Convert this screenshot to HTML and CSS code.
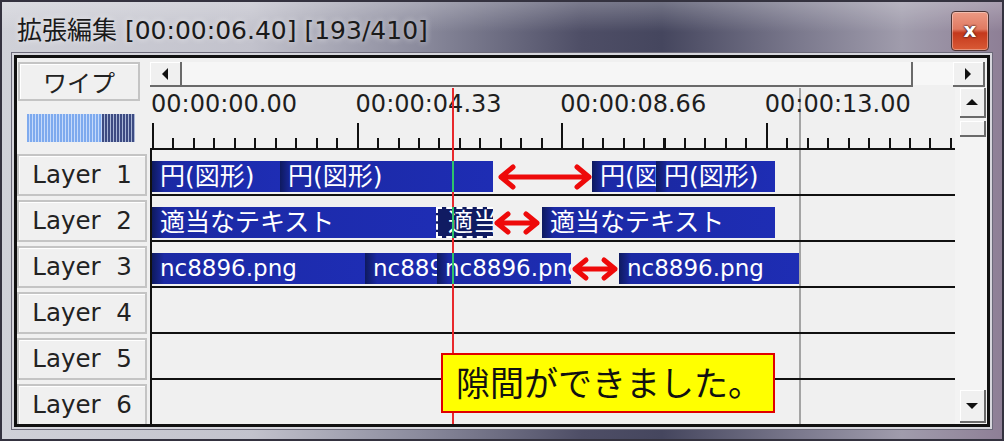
FILE: index.html
```html
<!DOCTYPE html>
<html lang="ja">
<head>
    <meta charset="UTF-8">
    <title>拡張編集</title>
    <link rel="stylesheet" href="styles.css">
</head>
<body>
    <div class="window">
        <div class="titlebar">
            <span class="title">拡張編集 [00:00:06.40] [193/410]</span>
            <span class="close">x</span>
        </div>

        <div class="client">
            <!-- layer names -->
            <div class="side">
                <div class="side-head">
                    <div class="label-btn wipe">ワイプ</div>
                    <div class="meter"></div>
                </div>
                <div class="label-btn layer">Layer&nbsp;&nbsp;1</div>
                <div class="label-btn layer">Layer&nbsp;&nbsp;2</div>
                <div class="label-btn layer">Layer&nbsp;&nbsp;3</div>
                <div class="label-btn layer">Layer&nbsp;&nbsp;4</div>
                <div class="label-btn layer">Layer&nbsp;&nbsp;5</div>
                <div class="label-btn layer">Layer&nbsp;&nbsp;6</div>
            </div>

            <!-- horizontal scrollbar -->
            <div class="hscroll">
                <div class="sbtn wide">
                    <svg width="8" height="12" viewBox="0 0 8 12"><polygon points="7,0 7,12 1,6" fill="#111"/></svg>
                </div>
                <div class="hthumb"></div>
                <div class="hspace"></div>
                <div class="sbtn wide">
                    <svg width="8" height="12" viewBox="0 0 8 12"><polygon points="1,0 1,12 7,6" fill="#111"/></svg>
                </div>
            </div>

            <!-- timeline -->
            <div class="timeline">
                <div class="end-mark"></div>

                <div class="ruler">
                    <div class="ruler-labels">
                        <span>00:00:00.00</span>
                        <span>00:00:04.33</span>
                        <span>00:00:08.66</span>
                        <span>00:00:13.00</span>
                    </div>
                    <div class="ticks"></div>
                </div>

                <div class="track">
                    <div class="clip jp" style="left: 0; width: 128px;">円(図形)</div>
                    <div class="clip jp" style="left: 128px; width: 213px;">円(図形)</div>
                    <div class="clip jp" style="left: 440px; width: 64px;">円(図形)</div>
                    <div class="clip jp" style="left: 504px; width: 119px;">円(図形)</div>
                    <svg class="gap-arrow" style="left: 345px; width: 96px;" viewBox="0 0 96 31">
                        <path d="M4 16 H92 M16 6 L4 16 L16 26 M80 6 L92 16 L80 26" />
                    </svg>
                </div>
                <div class="track">
                    <div class="clip jp" style="left: 0; width: 284px;">適当なテキスト</div>
                    <div class="clip jp selected" style="left: 284px; width: 57px;">適当なテキスト</div>
                    <div class="clip jp" style="left: 390px; width: 233px;">適当なテキスト</div>
                    <svg class="gap-arrow" style="left: 341px; width: 48px;" viewBox="0 0 48 31">
                        <path d="M4 16 H44 M15 7 L4 16 L15 25 M33 7 L44 16 L33 25" />
                    </svg>
                </div>
                <div class="track">
                    <div class="clip" style="left: 0; width: 213px;">nc8896.png</div>
                    <div class="clip" style="left: 213px; width: 72px;">nc8896.png</div>
                    <div class="clip" style="left: 285px; width: 134px;">nc8896.png</div>
                    <div class="clip" style="left: 467px; width: 180px;">nc8896.png</div>
                    <svg class="gap-arrow" style="left: 419px; width: 48px;" viewBox="0 0 48 31">
                        <path d="M4 16 H44 M15 7 L4 16 L15 25 M33 7 L44 16 L33 25" />
                    </svg>
                </div>
                <div class="track"></div>
                <div class="track"></div>
                <div class="track"></div>

                <div class="playhead"></div>
                <div class="note">隙間ができました。</div>
            </div>

            <!-- vertical scrollbar -->
            <div class="vscroll">
                <div class="sbtn up">
                    <svg width="12" height="8" viewBox="0 0 12 8"><polygon points="0,7 12,7 6,1" fill="#111"/></svg>
                </div>
                <div class="vthumb"></div>
                <div class="sbtn down">
                    <svg width="12" height="8" viewBox="0 0 12 8"><polygon points="0,1 12,1 6,7" fill="#111"/></svg>
                </div>
            </div>
        </div>
    </div>
</body>
</html>
```

FILE: styles.css
```css
html, body { margin: 0; padding: 0; }
body { width: 1004px; height: 441px; overflow: hidden; background: #222; }

.window {
    box-sizing: border-box; width: 1004px; height: 441px;
    border: 2px solid #34323f;
    padding: 0 12px 12px 12px;
    display: flex; flex-direction: column;
    background:
        linear-gradient(to bottom, rgba(255,255,255,0.25), rgba(255,255,255,0) 30px),
        linear-gradient(to right, #d0d1d8 0, #c2c2cc 25%, #8a8a9c 42%, #4e4e66 58%, #45465e 66%, #7c7a8e 80%, #a09cac 90%, #8e7f96 100%);
}

/* title bar */
.titlebar { height: 53px; display: flex; align-items: center; margin: 0 -12px; padding-left: 15px; }
.title { font: 25px "DejaVu Sans", "Noto Sans CJK JP", sans-serif; color: #1a1a1a; text-shadow: 0 0 6px rgba(255,255,255,0.7); margin-top: -2px; }
.close {
    margin-left: auto; margin-right: 13px; align-self: flex-start; margin-top: 9px;
    width: 36px; height: 38px; border: 1px solid #4c3434; border-radius: 4px;
    background: linear-gradient(to bottom, #ec9a84 0, #e07a62 45%, #c4381c 55%, #d95a36 100%);
    box-shadow: inset 0 0 0 1px rgba(255,255,255,0.35);
    color: #fff; font: bold 20px "DejaVu Sans", sans-serif; line-height: 36px; text-align: center;
    text-shadow: 0 0 2px #3a1a1a, 0 0 2px #3a1a1a;
}

/* client area */
.client {
    flex: 1; display: grid;
    grid-template-columns: 133px 805px 32px;
    grid-template-rows: 30px 60px 1fr;
    border: 3px solid #111; background: #f0f0f0; overflow: hidden;
    box-shadow: 0 0 0 2px #d6d6dc, 0 0 0 3px #6c6a7a;
}

.side { grid-column: 1; grid-row: 1 / 4; overflow: hidden; }
.side-head { height: 92px; }
.label-btn {
    box-sizing: border-box; background: #f0f0f0; color: #222;
    border: 2px solid #c4c4c4; box-shadow: inset 1px 1px 0 #fff;
    text-align: center;
}
.wipe { width: 122px; height: 39px; margin: 4px 0 0 1px; font: 24px/35px "Noto Sans CJK JP", sans-serif; }
.meter {
    width: 108px; height: 28px; margin: 13px 0 0 10px;
    background:
        repeating-linear-gradient(to right, #3d4b82 0 2px, #a9b6d6 2px 3px) right / 33px 100% no-repeat,
        repeating-linear-gradient(to right, #7eaaee 0 2px, #c6dafa 2px 3px);
}
.layer { width: 130px; height: 42px; margin-bottom: 4px; font: 24.5px/38px "DejaVu Sans", sans-serif; }

/* scrollbars */
.hscroll { grid-column: 2 / 4; grid-row: 1; display: flex; padding-top: 4px; }
.sbtn {
    box-sizing: border-box; background: #f0f0f0;
    border-right: 2px solid #6a6a6a; border-bottom: 2px solid #6a6a6a;
    box-shadow: inset 1px 1px 0 #fff;
    display: flex; align-items: center; justify-content: center;
}
.sbtn.wide { width: 32px; height: 25px; }
.hthumb { width: 731px; height: 25px; box-sizing: border-box; background: #f6f6f6; border-right: 2px solid #6a6a6a; border-bottom: 2px solid #6a6a6a; }
.hspace { width: 40px; height: 23px; background: #f7f7f7; }

.vscroll { grid-column: 3; grid-row: 2 / 4; display: flex; flex-direction: column; padding-left: 5px; background: #f3f3f3; }
.vscroll .sbtn { width: 26px; }
.up { height: 30px; }
.vthumb { width: 26px; height: 16px; margin-top: 3px; box-sizing: border-box; background: #f0f0f0; border-right: 2px solid #6a6a6a; border-bottom: 2px solid #6a6a6a; box-shadow: inset 1px 1px 0 #fff; }
.down { height: 33px; margin-top: auto; margin-bottom: 1px; }

/* timeline */
.timeline { grid-column: 2; grid-row: 2 / 4; position: relative; overflow: hidden; }
.ruler { height: 60px; position: relative; }
.ruler-labels { display: flex; padding: 3px 0 0 1px; font: 24px/27px "DejaVu Sans", sans-serif; color: #1e1e1e; }
.ruler-labels span { width: 204.6px; flex: none; }
.ticks {
    position: absolute; left: 2px; bottom: 0; width: 800px; height: 25px;
    background:
        repeating-linear-gradient(to right, #111 0 2px, transparent 2px 204.6px) left bottom / 100% 25px no-repeat,
        repeating-linear-gradient(to right, #111 0 2px, transparent 2px 20.46px) left bottom / 100% 10px no-repeat;
}

.track {
    position: relative; box-sizing: border-box; height: 46px;
    border-top: 2px solid #111; border-left: 2px solid #111; margin-right: -2px;
}
.clip {
    position: absolute; top: 11px; height: 31px; box-sizing: border-box;
    padding-left: 8px; overflow: hidden; white-space: nowrap;
    background: linear-gradient(to right, #0e1a5e 0, #1b29a4 12px, #1e2db4 100%);
    color: #fff; font: 23px/31px "DejaVu Sans", "Noto Sans CJK JP", sans-serif;
}
.clip.jp { font-size: 25px; }
.clip.selected { background: #101b62; border: 2px dashed #fff; border-right: none; padding-left: 10px; line-height: 27px; }

.gap-arrow { position: absolute; top: 11px; height: 31px; overflow: visible; }
.gap-arrow path { fill: none; stroke: #ee0a0a; stroke-width: 5; stroke-linecap: round; stroke-linejoin: round; }

.end-mark { position: absolute; left: 649px; top: 0; bottom: 0; width: 2px; background: #a4a4a4; }
/* red line, green where it crosses the clips of layers 1-3 */
.playhead {
    position: absolute; left: 302px; top: 0; bottom: 0; width: 2px;
    background: linear-gradient(to bottom,
        #e8282c 0 73px, #2ec46a 73px 104px,
        #e8282c 104px 119px, #2ec46a 119px 150px,
        #e8282c 150px 165px, #2ec46a 165px 196px,
        #e8282c 196px);
}

.note {
    position: absolute; left: 291px; top: 265px; width: 334px; height: 60px;
    box-sizing: border-box; border: 2px solid #e00000; background: #ffff00;
    padding-left: 13px; font: 34px/54px "Noto Sans CJK JP", sans-serif; color: #111;
}
```
